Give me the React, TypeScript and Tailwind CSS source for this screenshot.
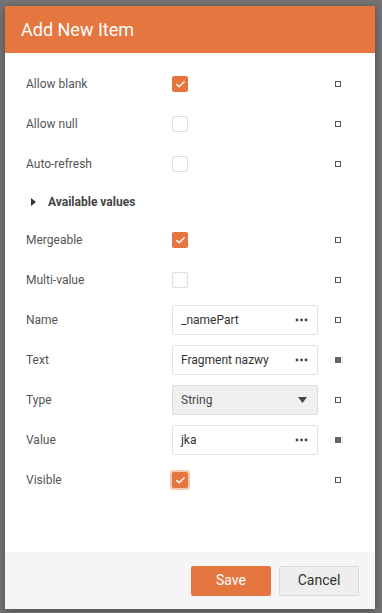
import { Check } from 'lucide-react'

type Row =
  | { kind: 'check'; label: string; checked: boolean; focus?: boolean; filled?: boolean }
  | { kind: 'text'; label: string; value: string; filled: boolean }
  | { kind: 'select'; label: string; value: string; filled: boolean }

const topRows: Row[] = [
  { kind: 'check', label: 'Allow blank', checked: true },
  { kind: 'check', label: 'Allow null', checked: false },
  { kind: 'check', label: 'Auto-refresh', checked: false },
]

const bottomRows: Row[] = [
  { kind: 'check', label: 'Mergeable', checked: true },
  { kind: 'check', label: 'Multi-value', checked: false },
  { kind: 'text', label: 'Name', value: '_namePart', filled: false },
  { kind: 'text', label: 'Text', value: 'Fragment nazwy', filled: true },
  { kind: 'select', label: 'Type', value: 'String', filled: false },
  { kind: 'text', label: 'Value', value: 'jka', filled: true },
  { kind: 'check', label: 'Visible', checked: true, focus: true },
]

function Dots() {
  return (
    <svg width="13" height="4" viewBox="0 0 13 4" className="shrink-0">
      <circle cx="2" cy="2" r="1.4" fill="#444" />
      <circle cx="6.5" cy="2" r="1.4" fill="#444" />
      <circle cx="11" cy="2" r="1.4" fill="#444" />
    </svg>
  )
}

function Indicator({ filled }: { filled?: boolean }) {
  return filled ? (
    <div className="w-[6px] h-[6px] bg-[#666]" />
  ) : (
    <div className="w-[6px] h-[6px] border border-[#555]" />
  )
}

function Control({ row }: { row: Row }) {
  if (row.kind === 'check') {
    return (
      <div className="w-[146px] flex items-center">
        {row.checked ? (
          <div
            className={
              'w-[16px] h-[16px] rounded-[2px] bg-[#E5763F] flex items-center justify-center ' +
              (row.focus ? 'ring-[2px] ring-[#f7c9b3]' : '')
            }
          >
            <Check className="w-[11px] h-[11px] text-white" strokeWidth={3} />
          </div>
        ) : (
          <div className="w-[16px] h-[16px] rounded-[2px] border border-[#e0e0e0] bg-white" />
        )}
      </div>
    )
  }
  if (row.kind === 'select') {
    return (
      <div className="w-[146px] h-[30px] rounded-[2px] border border-[#dcdcdc] bg-[#f0f0f0] flex items-center justify-between pl-[8px] pr-[10px] text-[12px] text-[#444]">
        <span>{row.value}</span>
        <svg width="9" height="6" viewBox="0 0 9 6">
          <path d="M0 0 L9 0 L4.5 6 Z" fill="#444" />
        </svg>
      </div>
    )
  }
  return (
    <div className="w-[146px] h-[30px] rounded-[2px] border border-[#e2e2e2] bg-white flex items-center justify-between pl-[8px] pr-[9px] text-[12px] text-[#333]">
      <span>{row.value}</span>
      <Dots />
    </div>
  )
}

function FieldRow({ row }: { row: Row }) {
  return (
    <div className="h-[40px] flex items-center pl-[21px]">
      <div className="w-[146px] text-[12px] text-[#555]">{row.label}</div>
      <Control row={row} />
      <div className="ml-[17px]">
        <Indicator filled={row.filled} />
      </div>
    </div>
  )
}

export default function App() {
  return (
    <div
      className="w-[382px] h-[613px] bg-[#747474] pt-[6px] pl-[5px] overflow-hidden"
      style={{ fontFamily: 'Roboto, "Liberation Sans", sans-serif' }}
    >
      <div className="w-[370px] h-[603px] bg-white flex flex-col shadow-[0_2px_8px_rgba(0,0,0,0.35)]">
        <div className="h-[47px] bg-[#E5763F] flex items-center pl-[16px] text-white text-[18px] shrink-0">
          Add New Item
        </div>
        <div className="flex-1 pt-[11px]">
          {topRows.map((r) => (
            <FieldRow key={r.label} row={r} />
          ))}
          <div className="h-[36px] flex items-center pl-[26px] gap-[12px] text-[12px] font-bold text-[#444]">
            <svg width="5" height="8" viewBox="0 0 5 8">
              <path d="M0 0 L5 4 L0 8 Z" fill="#333" />
            </svg>
            <span>Available values</span>
          </div>
          {bottomRows.map((r) => (
            <FieldRow key={r.label} row={r} />
          ))}
        </div>
        <div className="h-[57px] bg-[#f5f5f5] flex items-center justify-end gap-[8px] pr-[16px] shrink-0">
          <button className="w-[80px] h-[30px] rounded-[2px] bg-[#E5763F] text-white text-[14px]">
            Save
          </button>
          <button className="w-[80px] h-[30px] rounded-[2px] bg-[#eeeeee] border border-[#dadada] text-[#333] text-[14px]">
            Cancel
          </button>
        </div>
      </div>
    </div>
  )
}
